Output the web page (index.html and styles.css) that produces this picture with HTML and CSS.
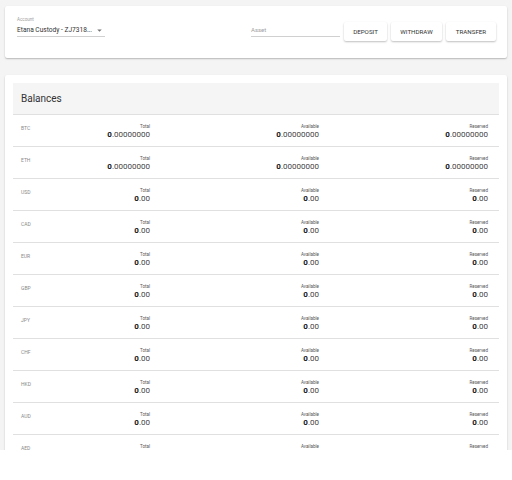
FILE: index.html
```html
<!DOCTYPE html>
<html lang="en">
<head>
  <meta charset="UTF-8">
  <meta name="viewport" content="width=device-width, initial-scale=1">
  <title>Balances</title>
  <link rel="stylesheet" href="styles.css">
</head>
<body>
  <div class="page">
    <div class="card toolbar">
      <div class="field account">
        <label>Account</label>
        <div class="select">
          <span>Etana Custody - ZJ7318...</span>
          <svg width="5" height="3" viewBox="0 0 6 4"><path d="M0 0.5h6L3 3.5z" fill="#757575"/></svg>
        </div>
      </div>
      <div class="field asset">
        <input type="text" placeholder="Asset">
      </div>
      <div class="actions">
        <button>Deposit</button>
        <button>Withdraw</button>
        <button>Transfer</button>
      </div>
    </div>

    <div class="card balances">
      <div class="balances-head">Balances</div>
      <div id="rows"></div>
    </div>
  </div>

  <script>
    const assets = [
      ['BTC', 8], ['ETH', 8], ['USD', 2], ['CAD', 2], ['EUR', 2], ['GBP', 2],
      ['JPY', 2], ['CHF', 2], ['HKD', 2], ['AUD', 2], ['AED', 2]
    ];

    const rows = document.getElementById('rows');
    assets.forEach(function(a) {
      const dec = '0'.repeat(a[1]);
      const cell = function(name) {
        return '<div class="amount"><div class="amount-label">' + name + '</div>' +
          '<div class="amount-value"><b>0</b>.' + dec + '</div></div>';
      };
      const row = document.createElement('div');
      row.className = 'row';
      row.innerHTML = '<div class="code">' + a[0] + '</div>' +
        cell('Total') + cell('Available') + cell('Reserved');
      rows.appendChild(row);
    });
  </script>
</body>
</html>
```

FILE: styles.css
```css
body {
  margin: 0;
  background: #fff;
  font-family: Roboto, 'Liberation Sans', sans-serif;
  color: #212121;
}
.page {
  height: 450px;
  overflow: hidden;
  background: #f4f4f4;
  padding: 6px 5px 0;
  box-sizing: border-box;
}
.card {
  background: #fff;
  border-radius: 2px;
  box-shadow: 0 1px 2px rgba(0,0,0,0.18), 0 1px 1px rgba(0,0,0,0.08);
}
.toolbar {
  height: 52px;
  display: flex;
  align-items: flex-start;
  padding: 0 11px 0 12px;
  box-sizing: border-box;
}
.field {
  display: flex;
  flex-direction: column;
}
.account {
  width: 88px;
  margin-top: 11px;
}
.account label {
  font-size: 4.5px;
  line-height: 6px;
  color: #9e9e9e;
}
.select {
  display: flex;
  align-items: center;
  justify-content: space-between;
  white-space: nowrap;
  font-size: 6.6px;
  line-height: 10px;
  padding: 2px 3px 1px 0;
  border-bottom: 1px solid #d0d0d0;
  color: #333;
}
.asset {
  margin-left: auto;
  width: 89px;
  margin-top: 20px;
}
.asset input {
  border: none;
  border-bottom: 1px solid #d0d0d0;
  outline: none;
  font-family: inherit;
  font-size: 6px;
  line-height: 8px;
  height: 11px;
  padding: 0 0 3px;
  margin: 0;
  box-sizing: border-box;
  color: #333;
}
.asset input::placeholder {
  color: #9e9e9e;
}
.actions {
  display: flex;
  gap: 4px;
  margin-left: 4px;
  margin-top: 16px;
}
.actions button {
  height: 19px;
  padding: 0;
  border: none;
  border-radius: 2px;
  background: #fff;
  font-family: inherit;
  font-size: 6.2px;
  font-weight: 400;
  text-transform: uppercase;
  color: #333;
  box-shadow: 0 1px 2px rgba(0,0,0,0.25);
  cursor: pointer;
}
.actions button:nth-child(1) { width: 43px; }
.actions button:nth-child(2) { width: 51px; }
.actions button:nth-child(3) { width: 50px; }
.balances {
  margin-top: 17px;
  padding: 8px 8px 0;
  height: 400px;
}
.balances-head {
  background: #f5f5f5;
  height: 31px;
  line-height: 31px;
  padding-left: 8px;
  font-size: 10px;
  color: #333;
  border-bottom: 1px solid #e0e0e0;
}
.row {
  height: 31px;
  border-bottom: 1px solid #e0e0e0;
  display: grid;
  grid-template-columns: 40px 89px 169px 169px;
  padding: 0 12px 0 8px;
  align-items: start;
}
.code {
  font-size: 5px;
  line-height: 6px;
  color: #8a8a8a;
  padding-top: 10px;
}
.amount {
  text-align: right;
  padding-top: 9px;
}
.amount-label {
  font-size: 4.5px;
  line-height: 6px;
  color: #555;
}
.amount-value {
  font-size: 8px;
  line-height: 9px;
  color: #444;
}
.amount-value b {
  font-weight: 700;
  color: #111;
}
```
